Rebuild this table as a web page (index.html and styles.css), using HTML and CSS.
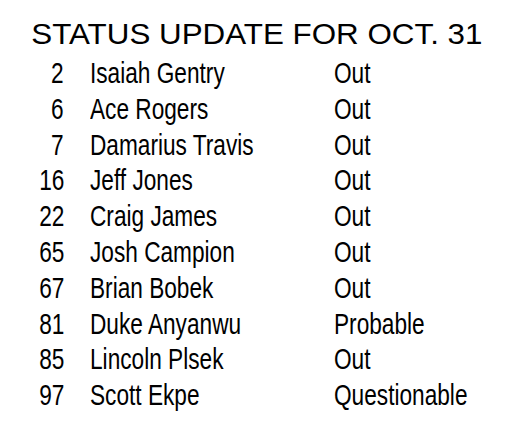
FILE: index.html
```html
<!DOCTYPE html>
<html>
<head>
<meta charset="utf-8">
<link rel="stylesheet" href="styles.css">
</head>
<body>
<div class="page">
  <h1 class="title"><span class="title-text">STATUS UPDATE FOR OCT. 31</span></h1>
  <div class="roster">
    <div class="num"><span>2</span></div><div class="name"><span>Isaiah Gentry</span></div><div class="status"><span>Out</span></div>
    <div class="num"><span>6</span></div><div class="name"><span>Ace Rogers</span></div><div class="status"><span>Out</span></div>
    <div class="num"><span>7</span></div><div class="name"><span>Damarius Travis</span></div><div class="status"><span>Out</span></div>
    <div class="num"><span>16</span></div><div class="name"><span>Jeff Jones</span></div><div class="status"><span>Out</span></div>
    <div class="num"><span>22</span></div><div class="name"><span>Craig James</span></div><div class="status"><span>Out</span></div>
    <div class="num"><span>65</span></div><div class="name"><span>Josh Campion</span></div><div class="status"><span>Out</span></div>
    <div class="num"><span>67</span></div><div class="name"><span>Brian Bobek</span></div><div class="status"><span>Out</span></div>
    <div class="num"><span>81</span></div><div class="name"><span>Duke Anyanwu</span></div><div class="status"><span>Probable</span></div>
    <div class="num"><span>85</span></div><div class="name"><span>Lincoln Plsek</span></div><div class="status"><span>Out</span></div>
    <div class="num"><span>97</span></div><div class="name"><span>Scott Ekpe</span></div><div class="status"><span>Questionable</span></div>
  </div>
</div>
</body>
</html>
```
FILE: styles.css
```css
html, body {
  margin: 0;
  padding: 0;
  background: #ffffff;
}
.page {
  width: 513px;
  height: 422px;
  padding-top: 17px;
  box-sizing: border-box;
  font-family: "Liberation Sans", Arial, sans-serif;
  color: #000;
}
.title {
  margin: 0;
  font-size: 30px;
  font-weight: normal;
  line-height: 33px;
  text-align: center;
  white-space: nowrap;
}
.title-text {
  display: inline-block;
  transform: scaleX(1.045);
  transform-origin: center;
}
.roster {
  margin-top: 5px;
  display: grid;
  grid-template-columns: 64px 270px 1fr;
  font-size: 30px;
  line-height: 35.8px;
  white-space: nowrap;
}
.roster span {
  display: inline-block;
  transform: scaleX(0.755);
  transform-origin: left center;
}
.num {
  text-align: right;
}
.num span {
  transform-origin: right center;
}
.name {
  padding-left: 26px;
}
```
